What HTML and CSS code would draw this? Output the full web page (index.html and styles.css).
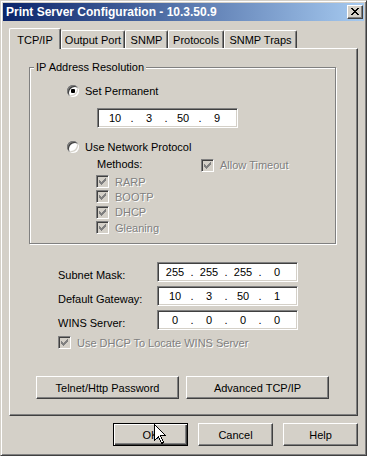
FILE: index.html
```html
<!DOCTYPE html>
<html lang="en">
<head>
    <meta charset="UTF-8">
    <title>Print Server Configuration - 10.3.50.9</title>
    <link rel="stylesheet" href="styles.css">
</head>
<body>
    <div class="window">
        <div class="titlebar">
            <span class="title">Print Server Configuration - 10.3.50.9</span>
            <span class="close">
                <svg width="8" height="7" viewBox="0 0 8 7" shape-rendering="crispEdges"><path d="M0 0h2v1H0zM6 0h2v1H6zM1 1h2v1H1zM5 1h2v1H5zM2 2h4v1H2zM3 3h2v1H3zM2 4h4v1H2zM1 5h2v1H1zM5 5h2v1H5zM0 6h2v1H0zM6 6h2v1H6z" fill="#000"/></svg>
            </span>
        </div>

        <div class="content">
            <div class="tabs">
                <div class="tab tab-tcp active">TCP/IP</div>
                <div class="tab tab-port">Output Port</div>
                <div class="tab tab-snmp">SNMP</div>
                <div class="tab tab-proto">Protocols</div>
                <div class="tab tab-traps">SNMP Traps</div>
            </div>

            <div class="panel">
                <div class="group">
                    <span class="group-title">IP Address Resolution</span>

                    <div class="radio-row set-permanent"><span class="radio checked"></span>Set Permanent</div>
                    <div class="ip ip-permanent">
                        <span class="octet">10</span><span class="dot">.</span>
                        <span class="octet">3</span><span class="dot">.</span>
                        <span class="octet">50</span><span class="dot">.</span>
                        <span class="octet">9</span>
                    </div>

                    <div class="radio-row use-network"><span class="radio"></span>Use Network Protocol</div>

                    <div class="methods">
                        <div class="methods-label">Methods:</div>
                        <div class="check disabled"><span class="box"><svg width="9" height="9" viewBox="0 0 9 9" shape-rendering="crispEdges"><path d="M1 3h1v3H1zM2 4h1v3H2zM3 5h1v3H3zM4 4h1v3H4zM5 3h1v3H5zM6 2h1v3H6zM7 1h1v3H7z"/></svg></span>Allow Timeout</div>
                        <div class="check disabled"><span class="box"><svg width="9" height="9" viewBox="0 0 9 9" shape-rendering="crispEdges"><path d="M1 3h1v3H1zM2 4h1v3H2zM3 5h1v3H3zM4 4h1v3H4zM5 3h1v3H5zM6 2h1v3H6zM7 1h1v3H7z"/></svg></span>RARP</div>
                        <div></div>
                        <div class="check disabled"><span class="box"><svg width="9" height="9" viewBox="0 0 9 9" shape-rendering="crispEdges"><path d="M1 3h1v3H1zM2 4h1v3H2zM3 5h1v3H3zM4 4h1v3H4zM5 3h1v3H5zM6 2h1v3H6zM7 1h1v3H7z"/></svg></span>BOOTP</div>
                        <div></div>
                        <div class="check disabled"><span class="box"><svg width="9" height="9" viewBox="0 0 9 9" shape-rendering="crispEdges"><path d="M1 3h1v3H1zM2 4h1v3H2zM3 5h1v3H3zM4 4h1v3H4zM5 3h1v3H5zM6 2h1v3H6zM7 1h1v3H7z"/></svg></span>DHCP</div>
                        <div></div>
                        <div class="check disabled"><span class="box"><svg width="9" height="9" viewBox="0 0 9 9" shape-rendering="crispEdges"><path d="M1 3h1v3H1zM2 4h1v3H2zM3 5h1v3H3zM4 4h1v3H4zM5 3h1v3H5zM6 2h1v3H6zM7 1h1v3H7z"/></svg></span>Gleaning</div>
                    </div>
                </div>

                <div class="fields">
                    <div class="field">
                        <span class="field-label">Subnet Mask:</span>
                        <div class="ip">
                            <span class="octet">255</span><span class="dot">.</span>
                            <span class="octet">255</span><span class="dot">.</span>
                            <span class="octet">255</span><span class="dot">.</span>
                            <span class="octet">0</span>
                        </div>
                    </div>
                    <div class="field">
                        <span class="field-label">Default Gateway:</span>
                        <div class="ip">
                            <span class="octet">10</span><span class="dot">.</span>
                            <span class="octet">3</span><span class="dot">.</span>
                            <span class="octet">50</span><span class="dot">.</span>
                            <span class="octet">1</span>
                        </div>
                    </div>
                    <div class="field">
                        <span class="field-label">WINS Server:</span>
                        <div class="ip">
                            <span class="octet">0</span><span class="dot">.</span>
                            <span class="octet">0</span><span class="dot">.</span>
                            <span class="octet">0</span><span class="dot">.</span>
                            <span class="octet">0</span>
                        </div>
                    </div>
                    <div class="check disabled wins"><span class="box"><svg width="9" height="9" viewBox="0 0 9 9" shape-rendering="crispEdges"><path d="M1 3h1v3H1zM2 4h1v3H2zM3 5h1v3H3zM4 4h1v3H4zM5 3h1v3H5zM6 2h1v3H6zM7 1h1v3H7z"/></svg></span>Use DHCP To Locate WINS Server</div>
                </div>

                <div class="panel-buttons">
                    <div class="btn wide">Telnet/Http Password</div>
                    <div class="btn wide">Advanced TCP/IP</div>
                </div>
            </div>

            <div class="dialog-buttons">
                <div class="btn default">OK</div>
                <div class="btn">Cancel</div>
                <div class="btn">Help</div>
            </div>
        </div>

        <!-- mouse pointer resting on the OK button -->
        <svg class="cursor" width="12" height="20" viewBox="0 0 12 20" shape-rendering="crispEdges">
            <path d="M0.5 0.5V16.5L4.5 12.5L7.5 19.5L9.5 18.5L6.5 11.5H11.5Z" fill="#fff" stroke="#000"/>
        </svg>
    </div>
</body>
</html>
```

FILE: styles.css
```css
body {
    margin: 0;
    background: #d4d0c8;
    font-family: "Liberation Sans", Arial, sans-serif;
    font-size: 11px;
    color: #000;
}

.window {
    position: relative;
    width: 367px;
    height: 456px;
    box-sizing: border-box;
    padding: 2px;
    background: #d4d0c8;
    border: 1px solid;
    border-color: #d4d0c8 #404040 #404040 #d4d0c8;
    box-shadow: inset 1px 1px 0 #fff, inset -1px -1px 0 #808080;
    display: flex;
    flex-direction: column;
}

/* title bar */
.titlebar {
    height: 18px;
    display: flex;
    align-items: center;
    justify-content: space-between;
    padding: 0 1px 0 3px;
    background: linear-gradient(to right, #0a246a, #a6caf0);
}

.title {
    color: #fff;
    font-weight: bold;
    font-size: 12px;
}

.close {
    width: 16px;
    height: 14px;
    box-sizing: border-box;
    display: flex;
    align-items: center;
    justify-content: center;
    background: #d4d0c8;
    border: 1px solid;
    border-color: #fff #404040 #404040 #fff;
    box-shadow: inset -1px -1px 0 #808080;
}

.close svg {
    margin: 0 0 1px 0;
}

/* tab strip + panel */
.content {
    padding: 7px 6px 0 6px;
    display: flex;
    flex-direction: column;
}

.tabs {
    display: flex;
    align-items: flex-end;
    height: 20px;
    position: relative;
    z-index: 1;
}

.tab {
    height: 18px;
    box-sizing: border-box;
    border: 1px solid;
    border-bottom: none;
    border-color: #fff #404040 #404040 #fff;
    border-radius: 2px 2px 0 0;
    box-shadow: inset -1px 0 0 #808080;
    background: #d4d0c8;
    text-align: center;
    line-height: 18px;
}

.tab.active {
    height: 21px;
    margin-bottom: -1px;
    line-height: 22px;
}

.tab-tcp { width: 52px; }
.tab-port { width: 64px; }
.tab-snmp { width: 43px; }
.tab-proto { width: 56px; }
.tab-traps { width: 73px; }

.panel {
    height: 368px;
    box-sizing: border-box;
    border: 1px solid;
    border-color: #fff #404040 #404040 #fff;
    box-shadow: inset -1px -1px 0 #808080;
    display: flex;
    flex-direction: column;
}

/* etched group box */
.group {
    width: 307px;
    height: 177px;
    box-sizing: border-box;
    margin: 18px 0 0 19px;
    border: 1px solid #808080;
    box-shadow: 1px 1px 0 #fff, inset 1px 1px 0 #fff;
}

.group-title {
    display: table;
    margin: -7px 0 0 4px;
    padding: 0 2px;
    line-height: 13px;
    background: #d4d0c8;
}

.radio-row {
    display: flex;
    align-items: center;
    height: 16px;
    margin-left: 37px;
    gap: 6px;
}

.set-permanent { margin-top: 9px; }
.use-network { margin-top: 11px; }

.radio {
    width: 12px;
    height: 12px;
    border-radius: 50%;
    background: #fff;
    box-shadow: inset 1px 1px 0 #808080, inset -1px -1px 0 #fff, inset 2px 2px 0 #404040, inset -2px -2px 0 #d4d0c8;
    display: flex;
    align-items: center;
    justify-content: center;
}

.radio.checked::after {
    content: "";
    width: 4px;
    height: 4px;
    border-radius: 1px;
    background: #000;
}

/* sunken IP address edit */
.ip {
    width: 141px;
    height: 20px;
    box-sizing: border-box;
    padding-left: 3px;
    display: flex;
    align-items: center;
    background: #fff;
    border: 1px solid;
    border-color: #808080 #fff #fff #808080;
    box-shadow: inset 1px 1px 0 #404040, inset -1px -1px 0 #d4d0c8;
}

.ip-permanent {
    margin: 9px 0 0 67px;
}

.octet {
    width: 28px;
    text-align: center;
}

.dot {
    width: 6px;
    text-align: center;
}

.methods {
    display: grid;
    grid-template-columns: 105px auto;
    grid-template-rows: 18px 15px 15px 16px 15px;
    margin: 1px 0 0 66px;
}

.methods-label {
    line-height: 16px;
    padding-left: 1px;
}

.methods .check:first-of-type {
    align-items: flex-start;
    padding-top: 2px;
}

.check {
    display: flex;
    align-items: center;
    gap: 6px;
}

.box {
    width: 13px;
    height: 13px;
    box-sizing: border-box;
    flex: none;
    display: flex;
    align-items: center;
    justify-content: center;
    border: 1px solid;
    border-color: #808080 #fff #fff #808080;
    box-shadow: inset 1px 1px 0 #404040, inset -1px -1px 0 #d4d0c8;
}

.disabled {
    color: #808080;
    text-shadow: 1px 1px 0 #fff;
}

.disabled .box {
    background: #d4d0c8;
}

.disabled .box svg {
    fill: #808080;
}

/* lower fields */
.fields {
    margin: 18px 0 0 48px;
    display: flex;
    flex-direction: column;
    gap: 4px;
}

.field {
    display: flex;
    align-items: center;
}

.field-label {
    width: 99px;
    padding-top: 6px;
}

.check.wins {
    height: 13px;
    margin-top: 2px;
}

.panel-buttons {
    display: flex;
    gap: 7px;
    margin: 27px 0 0 26px;
}

/* raised push buttons */
.btn {
    width: 75px;
    height: 23px;
    box-sizing: border-box;
    display: flex;
    align-items: center;
    justify-content: center;
    background: #d4d0c8;
    border: 1px solid;
    border-color: #fff #404040 #404040 #fff;
    box-shadow: inset -1px -1px 0 #808080;
}

.btn.wide {
    width: 143px;
}

.btn.default {
    border-color: #000;
    box-shadow: inset 1px 1px 0 #fff, inset -1px -1px 0 #404040, inset -2px -2px 0 #808080;
}

.dialog-buttons {
    display: flex;
    justify-content: flex-end;
    gap: 10px;
    margin-top: 7px;
}

.cursor {
    position: absolute;
    left: 153px;
    top: 423px;
}
```
